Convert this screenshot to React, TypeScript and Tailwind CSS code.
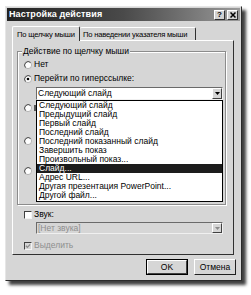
import React from 'react';

const items = [
  'Следующий слайд',
  'Предыдущий слайд',
  'Первый слайд',
  'Последний слайд',
  'Последний показанный слайд',
  'Завершить показ',
  'Произвольный показ...',
  'Слайд...',
  'Адрес URL...',
  'Другая презентация PowerPoint...',
  'Другой файл...',
];

function Radio({ checked }: { checked?: boolean }) {
  return (
    <svg width="8" height="8" viewBox="0 0 12 12" className="shrink-0">
      <circle cx="6" cy="6" r="5.4" fill="#fff" stroke="#9a9a9a" />
      <path d="M2.2 9.8 A5.4 5.4 0 0 1 9.8 2.2" stroke="#3a3a3a" fill="none" strokeWidth="1.3" />
      {checked && <circle cx="6" cy="6" r="2" fill="#000" />}
    </svg>
  );
}

function Check({ checked, disabled }: { checked?: boolean; disabled?: boolean }) {
  return (
    <div
      className={
        'w-[8px] h-[8px] shrink-0 border border-t-[#404040] border-l-[#404040] border-r-[#f4f4f4] border-b-[#f4f4f4] flex items-center justify-center ' +
        (disabled ? 'bg-[#d6d6d6]' : 'bg-white')
      }
    >
      {checked && (
        <svg width="6" height="6" viewBox="0 0 7 7">
          <path d="M1 3.2 L2.8 5 L6 1.5" stroke={disabled ? '#8a8a8a' : '#000'} strokeWidth="1.4" fill="none" />
        </svg>
      )}
    </div>
  );
}

function Arrow({ disabled }: { disabled?: boolean }) {
  return (
    <div className="w-[10px] h-full bg-[#d6d6d6] border border-t-white border-l-white border-r-[#404040] border-b-[#404040] flex items-center justify-center">
      <svg width="5" height="3" viewBox="0 0 5 3">
        <path d="M0 0 H5 L2.5 3 Z" fill={disabled ? '#8a8a8a' : '#000'} />
      </svg>
    </div>
  );
}

export default function App() {
  return (
    <div className="w-[251px] h-[295px] bg-white pl-[5px] pt-[6px] overflow-hidden font-['Liberation_Sans',Arial,sans-serif] text-[8.5px] leading-[9px] text-black">
      <div className="w-[237px] h-[275px] bg-[#d6d6d6] border border-t-[#e6e6e6] border-l-[#e6e6e6] border-r-[#2a2a2a] border-b-[#2a2a2a] shadow-[4px_4px_3px_rgba(0,0,0,0.75)] p-[1px] flex flex-col">
        {/* title bar */}
        <div className="h-[13px] shrink-0 flex items-center justify-between pl-[2px] pr-[2px] bg-linear-to-r from-[#222] via-[#4a4a4a] to-[#9a9a9a]">
          <span className="text-white font-bold text-[9px] tracking-[0.1px] whitespace-nowrap">Настройка действия</span>
          <div className="flex gap-[2px]">
            <div className="w-[11px] h-[10px] bg-[#d2d2d2] border border-t-white border-l-white border-r-[#303030] border-b-[#303030] flex items-center justify-center font-bold text-[8px] leading-none">
              ?
            </div>
            <div className="w-[11px] h-[10px] bg-[#d2d2d2] border border-t-white border-l-white border-r-[#303030] border-b-[#303030] flex items-center justify-center">
              <svg width="6" height="6" viewBox="0 0 6 6">
                <path d="M0.5 0.5 L5.5 5.5 M5.5 0.5 L0.5 5.5" stroke="#000" strokeWidth="1.5" />
              </svg>
            </div>
          </div>
        </div>

        {/* tabs */}
        <div className="flex items-end pl-[5px] mt-[4px] h-[15px] shrink-0 text-[7.6px] tracking-[-0.2px] whitespace-nowrap">
          <div className="h-[15px] w-[68px] relative z-10 -mb-px bg-[#d6d6d6] border border-b-0 border-t-white border-l-white border-r-[#303030] rounded-t-[2px] flex items-center pl-[4px] overflow-hidden">
            По щелчку мыши
          </div>
          <div className="h-[13px] w-[116px] bg-[#d6d6d6] border border-b-0 border-t-white border-l-0 border-r-[#303030] rounded-t-[2px] flex items-center pl-[3px] overflow-hidden">
            По наведении указателя мыши
          </div>
        </div>

        {/* panel */}
        <div className="ml-[5px] mr-[6px] h-[215px] border border-t-white border-l-white border-r-[#303030] border-b-[#303030] flex flex-col shrink-0">
          {/* group box */}
          <div className="relative ml-[4px] mt-[10px] w-[209px] h-[154px] border border-[#8c8c8c] shadow-[inset_1px_1px_0_#fff,1px_1px_0_#fff] flex flex-col">
            <span className="absolute -top-[5px] left-[4px] bg-[#d6d6d6] px-[1px] whitespace-nowrap">Действие по щелчку мыши</span>

            <div className="flex items-center gap-[2px] pl-[6px] mt-[8px] h-[9px]">
              <Radio />
              <span>Нет</span>
            </div>
            <div className="flex items-center gap-[2px] pl-[6px] mt-[5px] h-[9px]">
              <Radio checked />
              <span>Перейти по гиперссылке:</span>
            </div>

            <div className="relative ml-[18px] mt-[4px] w-[187px] h-[13px] bg-white border border-t-[#6a6a6a] border-l-[#6a6a6a] border-r-[#f0f0f0] border-b-[#f0f0f0] flex items-center justify-between">
              <span className="pl-[1px]">Следующий слайд</span>
              <Arrow />
              {/* open list */}
              <div className="absolute left-[-1px] top-[12px] w-[187px] h-[102px] z-20 bg-white border border-black flex flex-col">
                {items.map((t, i) => (
                  <div
                    key={t}
                    className={
                      'h-[9px] pl-[2px] shrink-0 whitespace-nowrap ' +
                      (i === 7 ? 'bg-[#1c1c1c] text-white' : '')
                    }
                  >
                    {t}
                  </div>
                ))}
              </div>
            </div>

            <div className="flex items-center gap-[2px] pl-[6px] mt-[3px] h-[9px]">
              <Radio />
              <div className="w-[2px] h-[6px] bg-[#555]" />
            </div>
            <div className="flex items-center pl-[6px] mt-[24px] h-[9px]">
              <Radio />
            </div>
            <div className="flex items-center pl-[6px] mt-[21px] h-[9px]">
              <Radio />
            </div>
          </div>

          {/* sound */}
          <div className="flex items-center gap-[2px] pl-[11px] mt-[5px] h-[9px]">
            <Check />
            <span>Звук:</span>
          </div>
          <div className="ml-[23px] mt-[3px] w-[187px] h-[12px] bg-[#d6d6d6] border border-t-[#6a6a6a] border-l-[#6a6a6a] border-r-[#f0f0f0] border-b-[#f0f0f0] flex items-center justify-between">
            <span className="pl-[1px] text-[#8e8e8e]">[Нет звука]</span>
            <Arrow disabled />
          </div>
          <div className="flex items-center gap-[2px] pl-[11px] mt-[7px] h-[9px]">
            <Check checked disabled />
            <span className="text-[#8e8e8e]">Выделить</span>
          </div>
        </div>

        {/* buttons */}
        <div className="flex justify-end gap-[6px] mt-[4px] pr-[4px]">
          <div className="w-[42px] h-[16px] border border-black flex">
            <div className="flex-1 bg-[#d6d6d6] border border-t-white border-l-white border-r-[#404040] border-b-[#404040] flex items-center justify-center">
              OK
            </div>
          </div>
          <div className="w-[42px] h-[16px] bg-[#d6d6d6] border border-t-white border-l-white border-r-[#202020] border-b-[#202020] flex items-center justify-center">
            Отмена
          </div>
        </div>
      </div>
    </div>
  );
}
